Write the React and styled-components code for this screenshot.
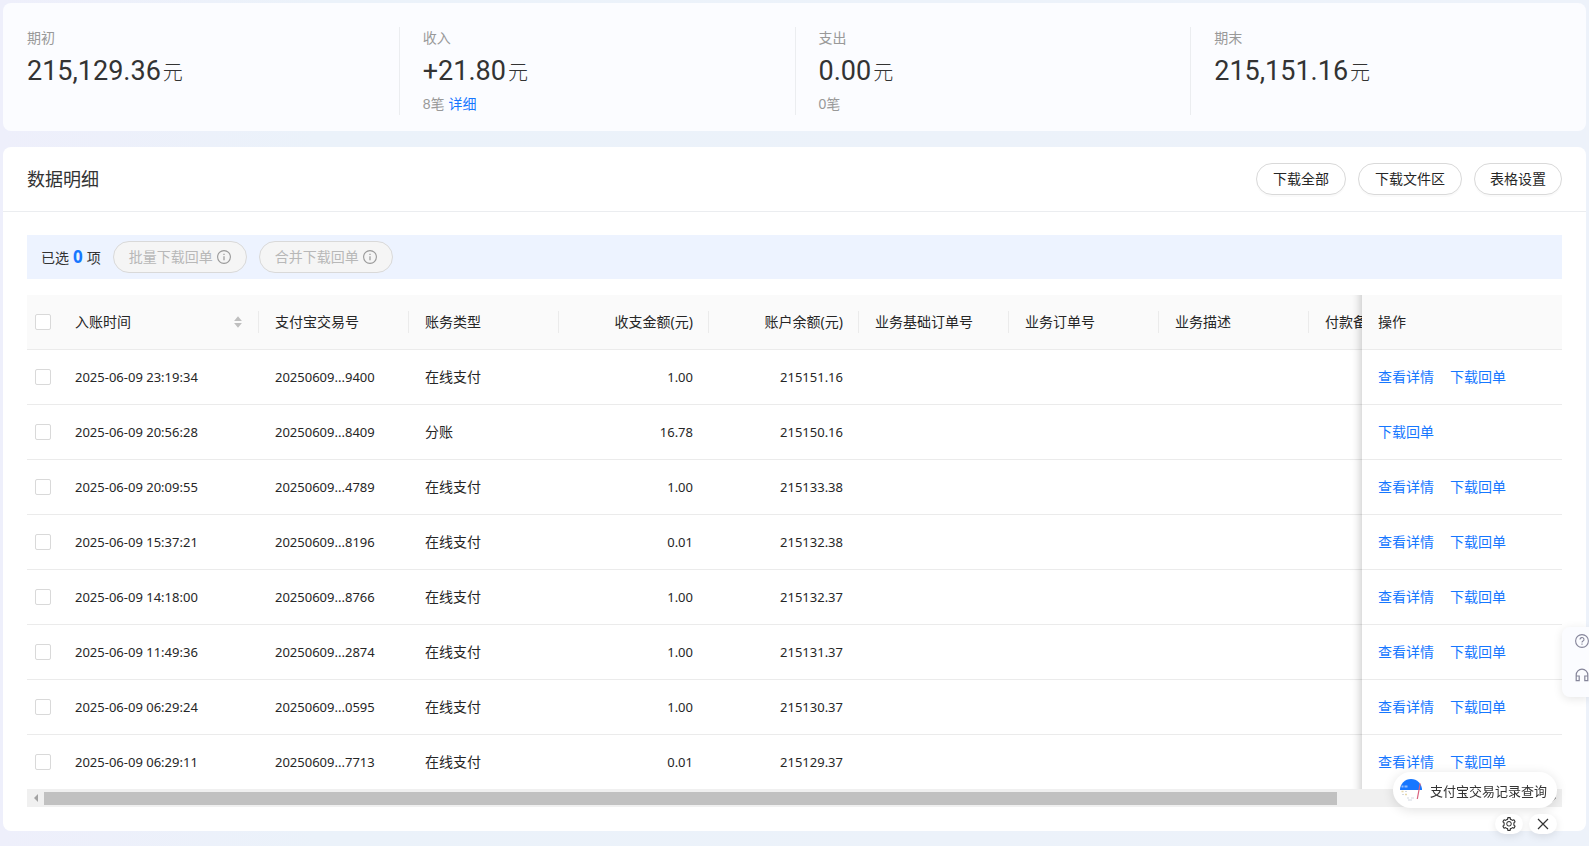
import React, { useLayoutEffect, useRef, useState } from "react";
import styled, { createGlobalStyle } from "styled-components";
import { AiOutlineSetting } from "react-icons/ai";

const GlobalStyle = createGlobalStyle`
  *, *::before, *::after { box-sizing: border-box; }
  body {
    margin: 0;
    min-height: 100vh;
    background: linear-gradient(90deg, #eeeffb 0%, #ebf2fa 20%, #edf2fa 100%);
    color: #333;
    font-family: "Noto Sans", "Noto Sans CJK SC", sans-serif;
    font-size: 14px;
    line-height: 22px;
  }
  button { font-family: inherit; cursor: pointer; }
`;

const Page = styled.main`
  display: flex;
  flex-direction: column;
  gap: 16px;
  padding: 3px 3px 15px;
`;

const Summary = styled.section`
  display: grid;
  grid-template-columns: repeat(4, 1fr);
  padding: 24px 0 16px;
  border-radius: 8px;
  background: #fbfcff;
`;

const Stat = styled.div`
  padding-left: 23px;
  min-height: 88px;
  border-left: 1px solid #ebedf0;
  &:first-child { border-left-color: transparent; }
`;

const Muted = styled.div`
  color: #999;
  font-family: "Liberation Sans", "Noto Sans CJK SC", sans-serif;
`;

const Amount = styled.div`
  height: 44px;
  line-height: 44px;
  font-family: Roboto, sans-serif;
  font-size: 27px;
  white-space: nowrap;
`;

const Unit = styled.span`
  margin-left: 2px;
  font-family: "Noto Sans CJK SC", sans-serif;
  font-weight: 300;
  font-size: 20px;
`;

const Link = styled.a`
  color: #1677ff;
  text-decoration: none;
  white-space: nowrap;
`;

const Panel = styled.section`
  border-radius: 8px;
  background: #fff;
`;

const PanelHead = styled.header`
  display: flex;
  align-items: center;
  justify-content: space-between;
  height: 65px;
  padding: 0 24px;
  border-bottom: 1px solid #ebedf0;
`;

const Title = styled.h2`
  margin: 0;
  font-size: 18px;
  font-weight: 400;
`;

const Actions = styled.div`
  display: flex;
  gap: 12px;
`;

const PillButton = styled.button`
  display: inline-flex;
  align-items: center;
  gap: 4px;
  height: 32px;
  padding: 0 ${(p) => (p.$wide ? 16 : 15)}px;
  border: 1px solid #d9d9d9;
  border-radius: 16px;
  background: #fff;
  color: #262626;
  font-size: 14px;
  line-height: 22px;
  white-space: nowrap;
  box-shadow: 0 2px 0 rgba(0, 0, 0, 0.02);
  &:disabled {
    background: #f5f5f5;
    color: #b8b8b8;
    box-shadow: none;
    cursor: not-allowed;
  }
`;

const PanelBody = styled.div`
  padding: 23px 24px 24px;
`;

const SelectionBar = styled.div`
  display: flex;
  align-items: center;
  gap: 12px;
  height: 44px;
  margin-bottom: 16px;
  padding-left: 14px;
  background: #edf3ff;
`;

const Count = styled.b`
  margin: 0 4px;
  color: #1677ff;
  font-size: 17px;
`;

const Scroller = styled.div`
  overflow-x: auto;
  scrollbar-width: none;
`;

const Table = styled.table`
  width: 1782px;
  table-layout: fixed;
  border-collapse: separate;
  border-spacing: 0;
`;

const cell = `
  padding: 0 16px;
  border-bottom: 1px solid #ebebeb;
  font-weight: 400;
  white-space: nowrap;
`;

const Th = styled.th`
  ${cell}
  position: relative;
  height: 55px;
  background: #fafafa;
  color: #262626;
  text-align: ${(p) => (p.$right ? "right" : "left")};
  &::after {
    content: "";
    position: absolute;
    top: 16px;
    right: 0;
    width: 1px;
    height: 22px;
    background: #ebebeb;
  }
`;

const Td = styled.td`
  ${cell}
  height: 55px;
  background: #fff;
  color: #262626;
  font-size: ${(p) => (p.$number ? 13 : 14)}px;
  text-align: ${(p) => (p.$right ? "right" : "left")};
`;

const CheckTh = styled.th`
  ${cell}
  padding: 0 8px;
  background: #fafafa;
`;

const CheckTd = styled.td`
  ${cell}
  padding: 0 8px;
`;

const Checkbox = styled.input`
  appearance: none;
  display: block;
  width: 16px;
  height: 16px;
  margin: 0;
  border: 1px solid #d9d9d9;
  border-radius: 2px;
  background: #fff;
  &:checked { background: #1677ff; border-color: #1677ff; }
`;

const pinned = `
  position: sticky;
  right: 0;
  &::after {
    content: "";
    position: absolute;
    top: 0;
    bottom: -1px;
    left: -30px;
    width: 30px;
    height: auto;
    background: none;
    box-shadow: inset -10px 0 8px -8px rgba(0, 0, 0, 0.2);
    pointer-events: none;
  }
`;

const PinnedTh = styled(Th)`
  ${pinned}
  &::after { right: auto; }
`;

const PinnedTd = styled(Td)`
  ${pinned}
`;

const RowLinks = styled.div`
  display: flex;
  gap: 16px;
`;

const SortHead = styled.div`
  display: flex;
  align-items: center;
  justify-content: space-between;
`;

const Track = styled.div`
  display: flex;
  align-items: center;
  height: 18px;
  margin-top: -1px;
  background: #f0f0f0;
  position: relative;
`;

const TrackEnd = styled.span`
  display: flex;
  justify-content: center;
  width: 17px;
`;

const TrackRail = styled.div`
  flex: 1;
`;

const Thumb = styled.div`
  height: 13px;
  background: #c1c1c1;
`;

const SideTools = styled.aside`
  position: fixed;
  right: 0;
  bottom: 149px;
  display: flex;
  flex-direction: column;
  align-items: flex-end;
  gap: 20px;
  width: 27px;
  height: 70px;
  padding: 7px 0;
  border-radius: 8px 0 0 8px;
  background: #fbfcff;
  box-shadow: 0 2px 10px rgba(0, 0, 0, 0.1);
`;

const IconButton = styled.button`
  display: flex;
  padding: 0;
  border: 0;
  background: none;
  color: #85859a;
`;

const Floating = styled.aside`
  position: fixed;
  right: 32px;
  bottom: 12px;
  display: flex;
  flex-direction: column;
  align-items: flex-end;
  gap: 6px;
`;

const Assistant = styled.button`
  display: flex;
  align-items: center;
  gap: 8px;
  height: 36px;
  padding: 0 10px 0 7px;
  border: 0;
  border-radius: 18px;
  background: #fff;
  color: #333;
  font-size: 13px;
  white-space: nowrap;
  box-shadow: 0 2px 12px rgba(0, 0, 0, 0.12);
`;

const FloatRow = styled.div`
  display: flex;
  gap: 6px;
`;

const MiniButton = styled.button`
  display: flex;
  align-items: center;
  justify-content: center;
  width: 28px;
  height: 20px;
  padding: 0;
  border: 0;
  border-radius: 10px;
  background: #fff;
  color: #333;
  box-shadow: 0 2px 8px rgba(0, 0, 0, 0.1);
`;

const InfoIcon = () => (
  <svg width="14" height="14" viewBox="0 0 14 14" fill="none" stroke="#999" aria-hidden="true">
    <circle cx="7" cy="7" r="6.4" strokeWidth="1.1" />
    <path d="M7 6.2v4M7 3.7v1.2" strokeWidth="1.2" />
  </svg>
);

const SortIcon = () => (
  <svg width="10" height="12" viewBox="0 0 10 12" fill="#bfbfbf" aria-hidden="true">
    <path d="M5 .3 8.900 5H1.100zM5 11.700 8.900 7H1.100z" />
  </svg>
);

const Arrow = ({ right }) => (
  <svg width="4" height="8" viewBox="0 0 4 8" fill={right ? "#505050" : "#a3a3a3"} aria-hidden="true">
    <path d={right ? "M0 0 4 4 0 8z" : "M4 0 0 4 4 8z"} />
  </svg>
);

const HelpIcon = () => (
  <svg width="14" height="14" viewBox="0 0 14 14" fill="none" stroke="currentColor" strokeWidth="1.1" aria-hidden="true">
    <circle cx="7" cy="7" r="6.4" />
    <path d="M5 5.500a2 1.900 0 1 1 3 1.600c-.7.4-1 .7-1 1.500M7 9.500v1.200" />
  </svg>
);

const HeadsetIcon = () => (
  <svg width="14" height="14" viewBox="0 0 14 14" fill="none" stroke="currentColor" strokeWidth="1.2" aria-hidden="true">
    <path d="M1.200 9V7a5.800 5.800 0 0 1 11.600 0v2M1.200 8h3v4.600h-3zM9.800 8h3v4.600h-3z" />
  </svg>
);

const LogoIcon = () => (
  <svg width="22" height="22" viewBox="0 0 22 22" aria-hidden="true">
    <path d="M0 11a11 11 0 0 1 22 0z" fill="#1677ff" />
    <path d="M1.500 7.500h2M4.500 7.500h3" stroke="#8fbcff" strokeWidth="2" />
    <path d="M20.200 4.500 17.300 20" stroke="#d9607d" strokeWidth="1.200" />
    <path d="M1.500 12.500h2M5 15.500h2" stroke="#e6d7a8" strokeWidth="1.500" />
    <path d="M5 12.500h2M2 15.500h2M7 19h2M11 19h3M8 21h4" stroke="#d3d7e2" strokeWidth="1.200" />
  </svg>
);

const CloseIcon = () => (
  <svg width="12" height="12" viewBox="0 0 12 12" fill="none" stroke="currentColor" strokeWidth="1.200" aria-hidden="true">
    <path d="M1 1l10 10M11 1 1 11" />
  </svg>
);

const stats = [
  { label: "期初", value: "215,129.36" },
  { label: "收入", value: "+21.80", count: "8笔", link: "详细" },
  { label: "支出", value: "0.00", count: "0笔" },
  { label: "期末", value: "215,151.16" },
];

const columns = [
  { title: "支付宝交易号" },
  { title: "账务类型" },
  { title: "收支金额(元)", right: true },
  { title: "账户余额(元)", right: true },
  { title: "业务基础订单号" },
  { title: "业务订单号" },
  { title: "业务描述" },
  { title: "付款备注" },
  { title: "" },
];

const rows = [
  ["2025-06-09 23:19:34", "20250609...9400", "在线支付", "1.00", "215151.16"],
  ["2025-06-09 20:56:28", "20250609...8409", "分账", "16.78", "215150.16"],
  ["2025-06-09 20:09:55", "20250609...4789", "在线支付", "1.00", "215133.38"],
  ["2025-06-09 15:37:21", "20250609...8196", "在线支付", "0.01", "215132.38"],
  ["2025-06-09 14:18:00", "20250609...8766", "在线支付", "1.00", "215132.37"],
  ["2025-06-09 11:49:36", "20250609...2874", "在线支付", "1.00", "215131.37"],
  ["2025-06-09 06:29:24", "20250609...0595", "在线支付", "1.00", "215130.37"],
  ["2025-06-09 06:29:11", "20250609...7713", "在线支付", "0.01", "215129.37"],
];

function DetailTable() {
  const scroller = useRef(null);
  const [bar, setBar] = useState({ size: 100, start: 0 });

  const measure = () => {
    const el = scroller.current;
    setBar({
      size: (el.clientWidth / el.scrollWidth) * 100,
      start: (el.scrollLeft / el.scrollWidth) * 100,
    });
  };

  useLayoutEffect(() => {
    measure();
    window.addEventListener("resize", measure);
    return () => window.removeEventListener("resize", measure);
  }, []);

  return (
    <>
      <Scroller ref={scroller} onScroll={measure}>
        <Table>
          <colgroup>
            <col width="32" />
            <col width="200" />
            {columns.map((c, i) => <col key={i} width="150" />)}
            <col width="200" />
          </colgroup>
          <thead>
            <tr>
              <CheckTh><Checkbox type="checkbox" aria-label="全选" /></CheckTh>
              <Th><SortHead>入账时间<SortIcon /></SortHead></Th>
              {columns.map((c, i) => <Th key={i} $right={c.right}>{c.title}</Th>)}
              <PinnedTh>操作</PinnedTh>
            </tr>
          </thead>
          <tbody>
            {rows.map(([time, no, type, amount, balance]) => (
              <tr key={time}>
                <CheckTd><Checkbox type="checkbox" aria-label={time} /></CheckTd>
                <Td $number>{time}</Td>
                <Td $number>{no}</Td>
                <Td>{type}</Td>
                <Td $number $right>{amount}</Td>
                <Td $number $right>{balance}</Td>
                <Td /><Td /><Td /><Td /><Td />
                <PinnedTd>
                  <RowLinks>
                    {type !== "分账" && <Link href="#detail">查看详情</Link>}
                    <Link href="#receipt">下载回单</Link>
                  </RowLinks>
                </PinnedTd>
              </tr>
            ))}
          </tbody>
        </Table>
      </Scroller>
      <Track>
        <TrackEnd><Arrow /></TrackEnd>
        <TrackRail>
          <Thumb style={{ width: `${bar.size}%`, marginLeft: `${bar.start}%` }} />
        </TrackRail>
        <TrackEnd><Arrow right /></TrackEnd>
      </Track>
    </>
  );
}

export default function App() {
  return (
    <>
      <GlobalStyle />
      <Page>
        <Summary>
          {stats.map((s) => (
            <Stat key={s.label}>
              <Muted>{s.label}</Muted>
              <Amount>{s.value}<Unit>元</Unit></Amount>
              {s.count && (
                <Muted>{s.count} {s.link && <Link href="#income">{s.link}</Link>}</Muted>
              )}
            </Stat>
          ))}
        </Summary>
        <Panel>
          <PanelHead>
            <Title>数据明细</Title>
            <Actions>
              <PillButton type="button" $wide>下载全部</PillButton>
              <PillButton type="button" $wide>下载文件区</PillButton>
              <PillButton type="button">表格设置</PillButton>
            </Actions>
          </PanelHead>
          <PanelBody>
            <SelectionBar>
              <span>已选<Count>0</Count>项</span>
              <PillButton type="button" disabled>批量下载回单<InfoIcon /></PillButton>
              <PillButton type="button" disabled>合并下载回单<InfoIcon /></PillButton>
            </SelectionBar>
            <DetailTable />
          </PanelBody>
        </Panel>
      </Page>
      <SideTools>
        <IconButton type="button" aria-label="帮助"><HelpIcon /></IconButton>
        <IconButton type="button" aria-label="客服"><HeadsetIcon /></IconButton>
      </SideTools>
      <Floating>
        <Assistant type="button"><LogoIcon />支付宝交易记录查询</Assistant>
        <FloatRow>
          <MiniButton type="button" aria-label="设置"><AiOutlineSetting size={16} /></MiniButton>
          <MiniButton type="button" aria-label="关闭"><CloseIcon /></MiniButton>
        </FloatRow>
      </Floating>
    </>
  );
}
